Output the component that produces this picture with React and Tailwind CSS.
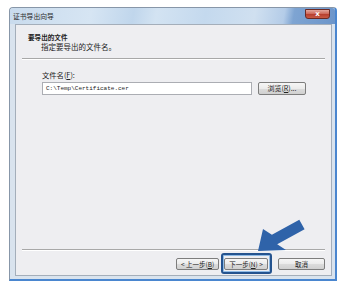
import React from "react";

const cjk = { fontFamily: '"Noto Sans CJK SC", "Noto Sans", sans-serif' };
const mono = { fontFamily: '"Liberation Mono", "DejaVu Sans Mono", monospace' };

function Btn({ children, className = "" }) {
  return (
    <div
      className={
        "h-[12px] flex items-center justify-center rounded-[2px] border border-[#7d7d7d] bg-[linear-gradient(180deg,#f6f6f6_0%,#ebebeb_50%,#dcdcdc_51%,#d0d0d0_100%)] text-[6.5px] leading-none text-[#222] " +
        className
      }
      style={cjk}
    >
      {children}
    </div>
  );
}

export default function App() {
  return (
    <div className="relative w-[347px] h-[290px] bg-white pt-[7px] pl-[9px]" style={cjk}>
      <div className="w-[328px] h-[274px] flex flex-col rounded-t-[4px] border border-[#8796a8] border-r-2 border-r-[#4a86cf] border-b-2 border-b-[#4a86cf] bg-[#d9e3ee]">
        {/* Title bar */}
        <div className="h-[16px] flex items-start justify-between pl-[3px] pr-[5px] rounded-t-[3px] bg-[linear-gradient(100deg,#c9dbed_0%,#d6e5f3_25%,#c0d6ec_38%,#d3e3f2_45%,#c4d9ee_60%,#d0e0f0_75%,#b4cce8_84%,#7ea4d2_87%,#6c95ca_100%)]">
          <span className="mt-[3px] text-[6.8px] leading-[10px] text-[#2b2b2b]">证书导出向导</span>
          <div className="mt-[1px] w-[25px] h-[10px] flex items-center justify-center rounded-b-[3px] border border-[#6b2a24] bg-[linear-gradient(180deg,#e3a69c_0%,#cf6b5c_45%,#b8402f_55%,#c75a44_100%)] text-white text-[7px] font-bold leading-none" style={{ fontFamily: '"DejaVu Sans", sans-serif' }}>
            x
          </div>
        </div>
        {/* Content panel */}
        <div className="flex-1 ml-[5px] mr-[3px] mb-[3px] flex flex-col border border-[#a4aeba] bg-[#eeeef1]">
          <div className="pt-[7px] pl-[12px] flex flex-col">
            <span className="text-[6.6px] leading-[10px] font-bold text-[#1c1c1c]">要导出的文件</span>
            <span className="pl-[13px] text-[7.5px] leading-[10px] text-[#222]">指定要导出的文件名。</span>
          </div>
          <div className="mt-[6px] mx-[6px] h-[2px] border-t border-[#a8a8a8] border-b border-b-white" />
          <div className="mt-[10px] pl-[26px] text-[7.3px] leading-[10px] text-[#222]">
            文件名(<span className="underline">F</span>):
          </div>
          <div className="mt-[2px] pl-[26px] flex items-center">
            <div className="w-[210px] h-[13px] flex items-center pl-[3px] border border-[#abadb3] bg-white text-[6px] leading-none text-[#222]" style={mono}>
              C:\Temp\Certificate.cer
            </div>
            <Btn className="ml-[6px] w-[48px] h-[13px] text-[7px]">
              浏览(<span className="underline">R</span>)...
            </Btn>
          </div>
          <div className="flex-1" />
          <div className="mx-[6px] h-[2px] border-t border-[#a8a8a8] border-b border-b-white" />
          <div className="mt-[7px] mb-[5px] pr-[6px] flex justify-end items-center">
            <Btn className="w-[43px]">
              &lt; 上一步(<span className="underline">B</span>)
            </Btn>
            <div className="relative ml-[5px]">
              <Btn className="w-[44px] border-[#3c7fb1] bg-[linear-gradient(180deg,#f2f7fb_0%,#e4eef7_50%,#d3e3f1_51%,#c6dbee_100%)]">
                下一步(<span className="underline">N</span>) &gt;
              </Btn>
              <div className="absolute -left-[3px] -right-[4px] -top-[5px] -bottom-[4px] rounded-[3px] border-2 border-[#24538f] shadow-[inset_0_0_0_1px_#8fbbe6]" />
            </div>
            <Btn className="ml-[10px] w-[47px]">取消</Btn>
          </div>
        </div>
      </div>
      {/* Arrow */}
      <svg className="absolute left-0 top-0 pointer-events-none" width="347" height="290" viewBox="0 0 347 290">
        <polygon
          points="258,251 263,229 271.9,234.7 299.3,219.7 304.6,229.3 277.2,244.3 286,250"
          fill="#2f63a9"
        />
      </svg>
    </div>
  );
}
